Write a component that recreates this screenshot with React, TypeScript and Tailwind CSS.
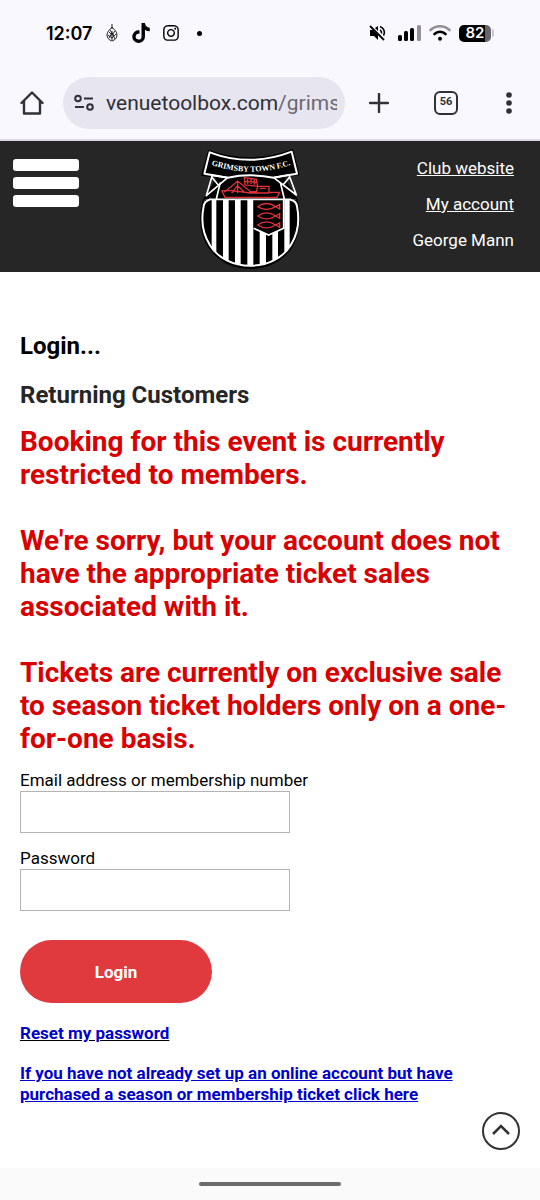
import { FaTiktok, FaInstagram } from "react-icons/fa6";

function StatusBar() {
  return (
    <div className="flex h-[66px] items-center justify-between pl-[46px] pr-[46px] text-black">
      <div className="flex items-center">
        <div className="w-[60px] font-[Inter] text-[18px] font-semibold">12:07</div>
        <svg className="h-[18px] w-[12px]" viewBox="0 0 12 18" fill="none" stroke="#222" strokeWidth="1">
          <path d="M6 0v5M6 3C4 6 1 7 1 11c0 3 2 5 5 6 3-1 5-3 5-6 0-4-3-5-5-8z" />
          <path d="M3 8l3 3 3-4M6 7v9M2 11l4 3 4-4M3 14l3-5 3 6M4 6l4 6" />
        </svg>
        <FaTiktok className="ml-[14px] h-5 w-[18px]" />
        <FaInstagram className="ml-3 h-[18px] w-[18px]" />
        <div className="ml-[17px] h-[5px] w-[5px] rounded-full bg-black" />
      </div>
      <div className="flex items-center">
        <svg className="h-[18px] w-[18px]" viewBox="0 0 18 18" fill="none" stroke="#000">
          <path d="M2 6h3l5 5v5l-4-4H2z" fill="#000" stroke="none" />
          <path d="M7 4l3-2v5z" fill="#000" stroke="none" />
          <path d="M2 2l14 14" strokeWidth="1.800" />
          <path d="M12 2.500c4 1.500 5.500 5.500 3.500 9M12 6c1.300.8 1.800 2 1.500 3.500" strokeWidth="1.600" />
        </svg>
        <svg className="ml-3 h-4 w-[23px]" viewBox="0 0 23 16">
          <rect x="0" y="10" width="4" height="6" rx="1.500" />
          <rect x="6" y="6" width="4" height="10" rx="1.500" />
          <rect x="12" y="3" width="4" height="13" rx="1.500" />
          <rect x="19" y="0" width="4" height="16" rx="1.500" fill="#938f99" />
        </svg>
        <svg className="ml-2 h-4 w-[22px]" viewBox="0 0 22 16" fill="none" strokeWidth="2.600" strokeLinecap="round">
          <path d="M1.500 5C7 0 15 0 20.500 5" stroke="#938f99" />
          <path d="M5.500 9c3-3 8-3 11 0" stroke="#000" />
          <circle cx="11" cy="13.800" r="2" fill="#000" />
        </svg>
        <div className="ml-2 flex h-[17px] w-8 items-center justify-center rounded-[5px] bg-linear-to-r from-black from-82% to-[#67646c] to-82% font-[Inter] text-[15px] font-semibold text-white">
          82
        </div>
        <div className="ml-px h-2 w-[2px] rounded-r bg-[#c9c6cf]" />
      </div>
    </div>
  );
}

function Toolbar() {
  return (
    <div className="flex h-[75px] items-center border-b-2 border-[#dcdae0] pl-5 pr-[19px] text-[#303038]">
      <button aria-label="Home">
        <svg className="h-6 w-6" viewBox="0 0 24 24" fill="none" stroke="currentColor" strokeWidth="2.400" strokeLinejoin="round" strokeLinecap="round">
          <path d="M1.500 12L12 1.500 22.500 12M4 10v12.500h16V10" />
        </svg>
      </button>
      <div className="ml-[19px] flex h-[52px] min-w-0 flex-1 items-center rounded-full bg-[#e7e5f0] pl-[11px] pr-2">
        <svg className="h-[18px] w-5 shrink-0" viewBox="0 0 20 18" fill="none" stroke="currentColor" strokeWidth="2">
          <circle cx="4" cy="4.500" r="2.800" />
          <path d="M10 4.500h9M1 13h9" />
          <circle cx="16" cy="13" r="2.800" />
        </svg>
        <div className="ml-3 flex-1 overflow-hidden whitespace-nowrap font-[Roboto] text-[21px] leading-8">
          venuetoolbox.com<span className="text-[#6a6974]">/grims</span>
        </div>
      </div>
      <button aria-label="New tab" className="ml-6">
        <svg className="h-5 w-5" viewBox="0 0 20 20" stroke="currentColor" strokeWidth="2.400" strokeLinecap="round">
          <path d="M10 1v18M1 10h18" />
        </svg>
      </button>
      <button className="ml-[45px] flex h-6 w-6 items-center justify-center rounded-[6px] border-2 border-current font-[Roboto] text-[11px] font-bold">
        56
      </button>
      <button aria-label="More" className="ml-[39px] flex w-6 justify-center">
        <svg className="h-[22px] w-[6px]" viewBox="0 0 6 22" fill="currentColor">
          <circle cx="3" cy="3" r="2.800" />
          <circle cx="3" cy="11" r="2.800" />
          <circle cx="3" cy="19" r="2.800" />
        </svg>
      </button>
    </div>
  );
}

function Crest() {
  return (
    <svg className="h-[122px] w-[110px]" viewBox="0 9 330 366" role="img" aria-label="Grimsby Town F.C.">
      <defs>
        <path id="arc" d="M38 56Q166 104 298 56" />
        <clipPath id="shield">
          <path d="M30 163H302C312 210 310 260 288 298C262 340 215 362 166 362C116 362 68 340 44 298C20 260 18 210 30 163Z" />
        </clipPath>
      </defs>
      <path d="M40 14Q166 60 294 12L314 90 268 98 308 164C320 210 316 264 294 304C266 350 216 372 166 372C114 372 66 350 38 304C12 264 10 210 24 164L64 98 18 92Z" fill="#000" />
      <g clipPath="url(#shield)">
        <rect x="10" y="160" width="310" height="210" fill="#fff" />
        <path d="M22 160h28v210h-28zM64 160h20v210h-20zM101 160h19v210h-19zM137 160h20v210h-20zM175 160h19v210h-19zM213 160h19v210h-19zM249 160h19v210h-19zM284 160h26v210h-26z" fill="#000" />
        <path d="M176 160h90v90l-45 20-45-20z" fill="#000" />
        <path d="M176 250l45 20 45-20V160" fill="none" stroke="#fff" strokeWidth="5" />
      </g>
      <g fill="none" stroke="#fff" strokeWidth="6" strokeLinejoin="round">
        <path d="M44 164Q28 168 26 184C18 224 22 264 44 299C68 340 116 362 166 362C216 362 264 340 288 299C310 264 314 224 306 184Q304 168 286 164" />
        <path d="M42 163H288M64 162L76 112M268 162L256 112" strokeWidth="5" />
        <path d="M44 22Q166 68 290 20L306 86Q266 92 236 98Q166 84 98 98Q66 92 28 86Z" fill="#000" />
        <path d="M52 91L34 152L98 98ZM50 96l20 24M282 90L304 150L236 98ZM284 96l-20 24" strokeWidth="5" />
      </g>
      <g fill="none" stroke="#e03038" strokeWidth="4">
        <path d="M80 137L90 157H246L254 142H222V124H188L184 140H166L128 108L88 142M128 108V144M80 137H110L166 144H222M110 144l18-22 20 20M194 130h18" />
        <path d="M148 98L184 103 188 124 150 120ZM158 102v14M168 103v14M178 105v14M148 109l38 3" />
        <path d="M188 185Q214 166 242 185L254 178V192L242 185Q214 202 188 185ZM188 213Q214 194 242 213L254 206V220L242 213Q214 230 188 213ZM188 240Q214 221 242 240L254 233V247L242 240Q214 257 188 240Z" />
      </g>
      <text fill="#fff" fontFamily="Liberation Serif" fontWeight="700" fontSize="24" textAnchor="middle">
        <textPath href="#arc" startOffset="50%">GRIMSBY TOWN F.C.</textPath>
      </text>
    </svg>
  );
}

function Header() {
  return (
    <header className="grid grid-cols-[182fr_110px_209fr] bg-[#262626] pb-[2px] pl-[13px] pr-[26px] text-white">
      <button aria-label="Menu" className="mt-[18px] flex w-[66px] flex-col gap-[6px] self-start">
        <span className="h-3 w-full rounded-[3px] bg-white" />
        <span className="h-3 w-full rounded-[3px] bg-white" />
        <span className="h-3 w-full rounded-[3px] bg-white" />
      </button>
      <div className="pt-[7px]">
        <Crest />
      </div>
      <div className="flex flex-col items-end pt-[9px] text-[17px] leading-9">
        <a href="#" className="underline">Club website</a>
        <a href="#" className="underline">My account</a>
        <div>George Mann</div>
      </div>
    </header>
  );
}

export default function App() {
  return (
    <div className="relative flex min-h-screen flex-col bg-white font-[Roboto,sans-serif] text-black">
      <div className="bg-[#faf8ff]">
        <StatusBar />
        <Toolbar />
      </div>
      <Header />
      <main className="flex-1 px-5 pt-[58px]">
        <h1 className="text-[24px] font-bold leading-8">Login...</h1>
        <h2 className="mt-[17px] text-[24px] font-bold leading-8 text-[#262626]">Returning Customers</h2>
        <div className="mt-[14px] flex flex-col gap-[33px] text-[28px] font-bold leading-[33px] text-[#d90000]">
          <p>Booking for this event is currently restricted to members.</p>
          <p>We're sorry, but your account does not have the appropriate ticket sales associated with it.</p>
          <p>Tickets are currently on exclusive sale to season ticket holders only on a one-for-one basis.</p>
        </div>
        <form className="mt-[14px] text-[17px] leading-[22px]">
          <label htmlFor="email" className="block">Email address or membership number</label>
          <input id="email" type="text" className="block h-[42px] w-[270px] border border-[#b4b4b4] px-2" />
          <label htmlFor="password" className="mt-[14px] block">Password</label>
          <input id="password" type="password" className="block h-[42px] w-[270px] border border-[#b4b4b4] px-2" />
          <button type="submit" className="mt-[29px] block h-[63px] w-48 rounded-full bg-[#e03a3e] font-bold text-white">
            Login
          </button>
        </form>
        <div className="mt-5 flex flex-col items-start gap-[19px] text-[17px] font-bold leading-[21px] text-[#0000cc]">
          <a href="#" className="underline decoration-black">Reset my password</a>
          <a href="#" className="underline">
            If you have not already set up an online account but have purchased a season or membership ticket click here
          </a>
        </div>
      </main>
      <button aria-label="Back to top" className="absolute bottom-[50px] right-5">
        <svg className="h-[38px] w-[38px]" viewBox="0 0 38 38" fill="none" stroke="#333" strokeWidth="2">
          <circle cx="19" cy="19" r="18" />
          <path d="M11 22l8-8 8 8" strokeWidth="2.500" />
        </svg>
      </button>
      <div className="flex h-8 items-center justify-center bg-[#fafafa]">
        <div className="h-1 w-[142px] rounded-full bg-[#6b6b6b]" />
      </div>
    </div>
  );
}
